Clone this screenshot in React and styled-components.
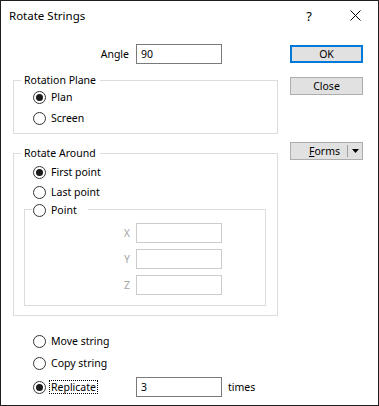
import React from 'react';
import styled, { createGlobalStyle } from 'styled-components';

const FONT = `"Noto Sans", "Open Sans", Arial, sans-serif`;

const Global = createGlobalStyle`
  html, body { margin: 0; padding: 0; background: #fff; }
  body { font-family: ${FONT}; }
  * { box-sizing: border-box; }
`;

const Window = styled.div`
  width: 379px;
  height: 406px;
  border: 1px solid #1f1f1f;
  background: #fff;
  display: flex;
  flex-direction: column;
  font-family: ${FONT};
  font-size: 10.5px;
  color: #000;
`;

const TitleBar = styled.div`
  height: 29px;
  flex: none;
  display: flex;
  align-items: center;
`;

const Title = styled.div`
  flex: 1;
  padding-left: 8px;
  font-size: 11.5px;
`;

const TitleButton = styled.div`
  width: 46px;
  height: 29px;
  display: flex;
  align-items: center;
  justify-content: center;
  font-size: 13px;
`;

const Body = styled.div`
  display: flex;
  gap: 12px;
  padding: 14px 0 0 12px;
`;

const MainColumn = styled.div`
  width: 265px;
  display: flex;
  flex-direction: column;
`;

const SideColumn = styled.div`
  width: 73px;
  display: flex;
  flex-direction: column;
  padding-top: 1px;
`;

const FieldRow = styled.div`
  display: grid;
  grid-template-columns: ${p => p.$labelWidth}px 86px;
  column-gap: ${p => p.$gap}px;
  align-items: center;
  height: 20px;
`;

const FieldLabel = styled.span`
  text-align: right;
  color: ${p => (p.$disabled ? '#a6a6a6' : '#000')};
`;

const TextInput = styled.input`
  width: 86px;
  height: 20px;
  border: 1px solid ${p => (p.disabled ? '#cccccc' : '#7a7a7a')};
  background: #fff;
  padding: 0 0 0 4px;
  margin: 0;
  font-family: ${FONT};
  font-size: 10.5px;
  color: #000;
  outline: none;
`;

const Group = styled.div`
  position: relative;
  border: 1px solid #dcdcdc;
  margin-top: ${p => p.$mt || 0}px;
  margin-left: ${p => p.$ml || 0}px;
  margin-right: ${p => p.$mr || 0}px;
  padding: ${p => p.$pad};
  display: flex;
  flex-direction: column;
  gap: ${p => p.$gap || 0}px;
`;

const GroupLabel = styled.div`
  position: absolute;
  top: -9px;
  left: 7px;
  padding: 0 4px 0 3px;
  line-height: 16px;
  background: #fff;
`;

const GroupRadioLegend = styled.div`
  position: absolute;
  top: -10px;
  left: 7px;
  padding: 0 9px 0 1px;
  background: #fff;
`;

const RadioOption = styled.label`
  display: flex;
  align-items: center;
  gap: 3px;
  height: 20px;
  padding-left: ${p => p.$indent || 0}px;
  margin-top: ${p => p.$mt || 0}px;
`;

const RadioCircle = styled.span`
  width: 13px;
  height: 13px;
  flex: none;
  border-radius: 50%;
  border: 1px solid #333;
  background: #fff;
  display: flex;
  align-items: center;
  justify-content: center;
  &::after {
    content: '';
    width: 7px;
    height: 7px;
    border-radius: 50%;
    background: #1a1a1a;
    display: ${p => (p.$checked ? 'block' : 'none')};
  }
`;

const RadioText = styled.span`
  border: 1px dotted ${p => (p.$focused ? '#000' : 'transparent')};
  padding: 0 1px;
  line-height: 12px;
`;

const CoordGrid = styled.div`
  display: grid;
  grid-template-columns: 105px 86px;
  column-gap: 6px;
  row-gap: 6px;
  align-items: center;
`;

const ReplicateRow = styled.div`
  display: grid;
  grid-template-columns: 123px 86px auto;
  align-items: center;
  height: 20px;
  margin-top: 4px;
`;

const Suffix = styled.span`
  margin-left: 6px;
`;

const Button = styled.button`
  width: 73px;
  height: 18px;
  margin: ${p => p.$mt || 0}px 0 0 0;
  padding: 0;
  background: #e1e1e1;
  border: ${p => (p.$default ? '2px solid #0078d7' : '1px solid #adadad')};
  font-family: ${FONT};
  font-size: 10.5px;
  color: #000;
  display: flex;
  align-items: center;
  justify-content: center;
`;

const SplitButton = styled(Button)`
  justify-content: stretch;
`;

const SplitLabel = styled.span`
  flex: 1;
  text-align: right;
  padding-right: 7px;
`;

const SplitDivider = styled.span`
  width: 1px;
  height: 12px;
  background: #a0a0a0;
`;

const SplitArrow = styled.span`
  width: 14px;
  display: flex;
  align-items: center;
  justify-content: center;
`;

function Radio({ label, checked, focused, indent, mt }) {
  return (
    <RadioOption $indent={indent} $mt={mt}>
      <RadioCircle $checked={checked} />
      <RadioText $focused={focused}>{label}</RadioText>
    </RadioOption>
  );
}

export default function App() {
  return (
    <>
      <Global />
      <Window>
        <TitleBar>
          <Title>Rotate Strings</Title>
          <TitleButton>?</TitleButton>
          <TitleButton>
            <svg width="11" height="11" viewBox="0 0 11 11">
              <path d="M0.5 0.5 L10.5 10.5 M10.5 0.5 L0.5 10.5" stroke="#000" strokeWidth="1" fill="none" />
            </svg>
          </TitleButton>
        </TitleBar>
        <Body>
          <MainColumn>
            <FieldRow $labelWidth={116} $gap={7}>
              <FieldLabel>Angle</FieldLabel>
              <TextInput defaultValue="90" />
            </FieldRow>

            <Group $mt={16} $pad="6px 0 5px 19px" $gap={1}>
              <GroupLabel>Rotation Plane</GroupLabel>
              <Radio label="Plan" checked />
              <Radio label="Screen" />
            </Group>

            <Group $mt={19} $pad="8px 0 9px 0">
              <GroupLabel>Rotate Around</GroupLabel>
              <Radio label="First point" checked indent={19} />
              <Radio label="Last point" indent={19} />
              <Group $mt={7} $ml={10} $mr={11} $pad="13px 0 10px 0">
                <GroupRadioLegend>
                  <Radio label="Point" />
                </GroupRadioLegend>
                <CoordGrid>
                  <FieldLabel $disabled>X</FieldLabel>
                  <TextInput disabled />
                  <FieldLabel $disabled>Y</FieldLabel>
                  <TextInput disabled />
                  <FieldLabel $disabled>Z</FieldLabel>
                  <TextInput disabled />
                </CoordGrid>
              </Group>
            </Group>

            <Radio label="Move string" indent={20} mt={15} />
            <Radio label="Copy string" indent={20} mt={2} />
            <ReplicateRow>
              <Radio label="Replicate" checked focused indent={20} />
              <TextInput defaultValue="3" />
              <Suffix>times</Suffix>
            </ReplicateRow>
          </MainColumn>

          <SideColumn>
            <Button $default>OK</Button>
            <Button $mt={14}>Close</Button>
            <SplitButton $mt={47}>
              <SplitLabel><u>F</u>orms</SplitLabel>
              <SplitDivider />
              <SplitArrow>
                <svg width="7" height="4" viewBox="0 0 7 4">
                  <path d="M0 0 H7 L3.5 4 Z" fill="#000" />
                </svg>
              </SplitArrow>
            </SplitButton>
          </SideColumn>
        </Body>
      </Window>
    </>
  );
}
